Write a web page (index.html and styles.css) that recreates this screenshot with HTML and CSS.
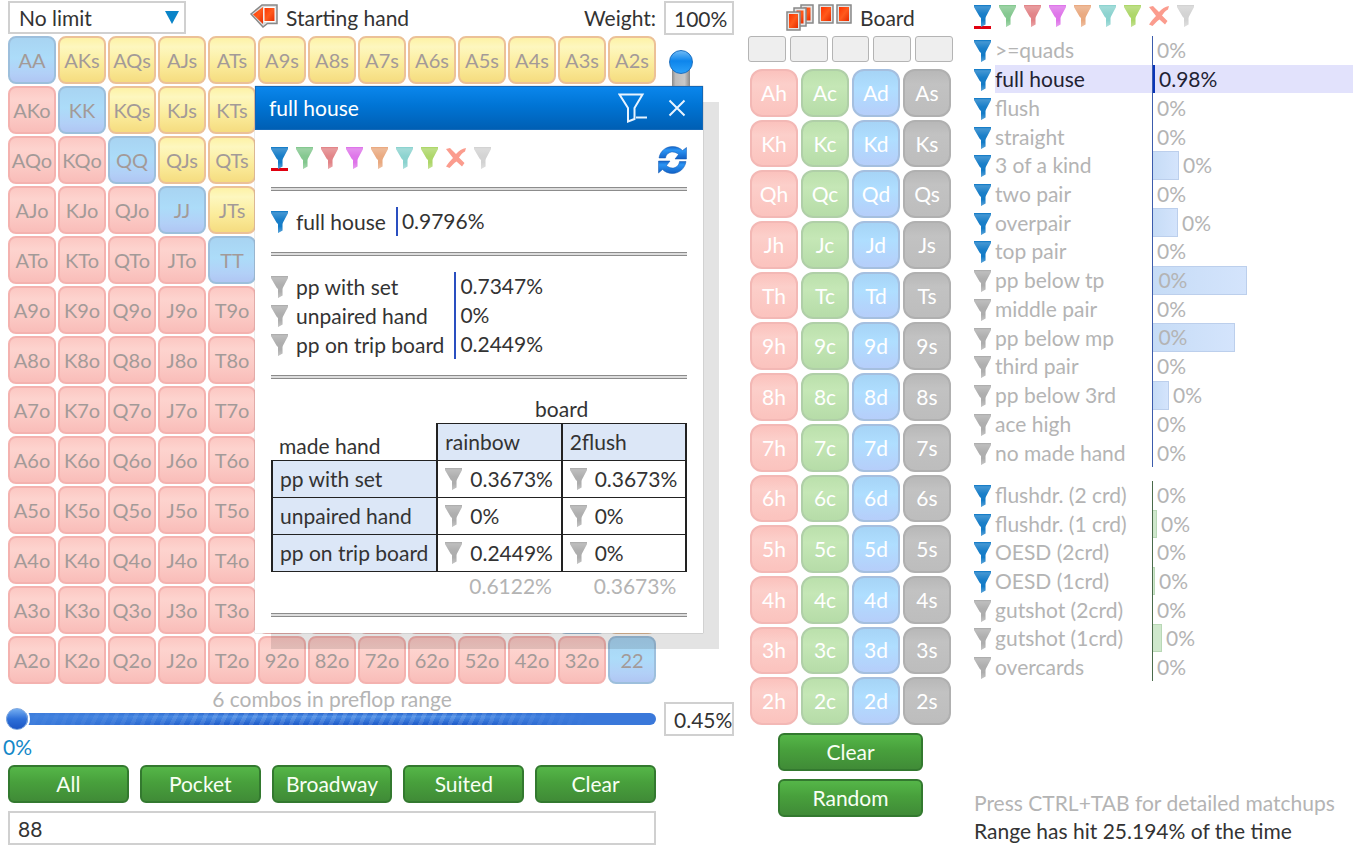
FILE: index.html
```html
<!DOCTYPE html>
<html lang="en">
<head>
    <meta charset="UTF-8">
    <meta name="viewport" content="width=device-width, initial-scale=1.0">
    <title>Starting hand range</title>
    <link rel="stylesheet" href="styles.css">
</head>
<body>

<!-- Shared icons -->
<svg class="icon-defs" aria-hidden="true">
    <defs>
        <linearGradient id="shine" x1="0" y1="0" x2="0" y2="1">
            <stop offset="0" stop-color="#fff" stop-opacity="0"/>
            <stop offset="0.08" stop-color="#fff" stop-opacity="0.25"/>
            <stop offset="0.4" stop-color="#fff" stop-opacity="0.08"/>
            <stop offset="0.7" stop-color="#fff" stop-opacity="0.05"/>
            <stop offset="1" stop-color="#fff" stop-opacity="0.35"/>
        </linearGradient>
        <linearGradient id="card-red" x1="0" y1="0" x2="1" y2="1">
            <stop offset="0" stop-color="#f30"/>
            <stop offset="0.5" stop-color="#ff5a1c"/>
            <stop offset="1" stop-color="#e62a00"/>
        </linearGradient>
        <linearGradient id="sync-blue" x1="0" y1="0" x2="0" y2="1">
            <stop offset="0" stop-color="#1565c8"/>
            <stop offset="0.3" stop-color="#2b95f5"/>
            <stop offset="1" stop-color="#1260c4"/>
        </linearGradient>
    </defs>
    <symbol id="funnel" viewBox="0 0 17 22">
        <path fill="currentColor" d="M0 0H17V2L12 11.500L11.500 13V19.500L7 22V13L5.500 11.500L0 2Z"/>
        <path fill="url(#shine)" d="M0 0H17V2L12 11.500L11.500 13V19.500L7 22V13L5.500 11.500L0 2Z"/>
    </symbol>
    <symbol id="cross" viewBox="0 0 20 20">
        <path fill="currentColor" d="M0 1L4 0L10 6C13 3 16 0.500 20 0L19 3.500C16 5 14.500 7.500 13 9.500L18.500 15L16 18.500L10.500 13.500C8 15 6.500 17 3.500 20L0 18.500C2 15.500 4.500 12.500 7 10Z"/>
    </symbol>
</svg>

<main class="app">

    <section class="hands">
        <div class="hands-top">
            <div class="limit">
                <select id="limit" aria-label="Limit type">
                    <option>No limit</option>
                    <option>Pot limit</option>
                    <option>Fixed limit</option>
                </select>
                <span class="limit-arrow"></span>
            </div>
            <h2 class="title">
                <svg width="28" height="24" viewBox="0 0 28 24" aria-hidden="true">
                    <path fill="#ddd" stroke="#888" stroke-width="1.500" d="M1 10L12 1H27V19.500H17.500L13 23Z"/>
                    <path fill="url(#card-red)" d="M3 10.500L13 3V20Z"/>
                    <path fill="url(#card-red)" stroke="#fff" d="M14 3.500H25V17.500H14Z"/>
                </svg>
                Starting hand
            </h2>
            <label class="weight-label" for="weight">Weight:</label>
        </div>
        <input class="box" id="weight" type="text" value="100%">

        <div class="matrix" id="matrix"></div>
        <div class="weight-track">
            <input class="vslider" type="range" min="0" max="100" value="100" aria-label="Weight">
        </div>

        <div class="range-row">
            <label class="combos" for="percent-slider">6 combos in preflop range</label>
            <input class="hslider" id="percent-slider" type="range" min="0" max="100" value="0">
            <output class="slider-value" for="percent-slider">0%</output>
        </div>
        <div class="percent">
            <input class="box" type="text" value="0.45%" aria-label="Range percent">
        </div>

        <div class="presets">
            <button class="btn">All</button>
            <button class="btn">Pocket</button>
            <button class="btn">Broadway</button>
            <button class="btn">Suited</button>
            <button class="btn">Clear</button>
        </div>
        <input class="box range-text" type="text" value="88" aria-label="Range">

        <!-- Detail window -->
        <div class="popup" id="popup" role="dialog" aria-labelledby="popup-title">
            <header class="popup-head">
                <h3 id="popup-title">full house</h3>
                <button class="head-btn" aria-label="Remove filter">
                    <svg width="30" height="30" viewBox="0 0 30 30" fill="none" stroke="#e8f4ff" stroke-width="2" aria-hidden="true">
                        <path d="M1.500 1.500H24.500L16.500 15V26L10 28.500V15Z"/>
                        <path d="M18 24.500H29"/>
                    </svg>
                </button>
                <button class="head-btn" aria-label="Close">
                    <svg width="18" height="18" viewBox="0 0 18 18" fill="none" stroke="#e8f4ff" stroke-width="2" aria-hidden="true">
                        <path d="M1.500 1.500L16.500 16.500M16.500 1.500L1.500 16.500"/>
                    </svg>
                </button>
            </header>
            <div class="popup-body">
                <div class="popup-tools">
                    <div class="filters"></div>
                    <button class="sync" aria-label="Refresh">
                        <svg width="29" height="28" viewBox="0 0 29 28" aria-hidden="true">
                            <path fill="url(#sync-blue)" stroke="#0f57b0" stroke-width="0.500" d="M1 12C2 5 8 0.500 14.500 0.500C18.500 0.500 22 2 24.500 4.500L28.500 1.500V13H17L20.500 8.500C19 7 17 6 14.500 6C11 6 8 8.500 7.500 12Z"/>
                            <path fill="url(#sync-blue)" stroke="#0f57b0" stroke-width="0.500" d="M28 15.500C27 22.500 21 27.500 14.500 27.500C10.500 27.500 7 26 4.500 23.500L0.500 27V15H12L8.500 19.500C10 21 12 22 14.500 22C18 22 21 19.500 21.500 15.500Z"/>
                        </svg>
                    </button>
                </div>
                <hr>
                <div class="detail">
                    <svg class="funnel on"><use href="#funnel"/></svg>
                    <span class="name">full house</span>
                    <span class="val">0.9796%</span>
                </div>
                <hr>
                <div class="detail">
                    <svg class="funnel"><use href="#funnel"/></svg>
                    <span class="name">pp with set</span>
                    <span class="val">0.7347%</span>
                    <svg class="funnel"><use href="#funnel"/></svg>
                    <span class="name">unpaired hand</span>
                    <span class="val">0%</span>
                    <svg class="funnel"><use href="#funnel"/></svg>
                    <span class="name">pp on trip board</span>
                    <span class="val">0.2449%</span>
                </div>
                <hr>
                <table class="breakdown">
                    <thead>
                        <tr>
                            <td></td>
                            <th class="axis" colspan="2">board</th>
                        </tr>
                        <tr class="line">
                            <th class="corner">made hand</th>
                            <th>rainbow</th>
                            <th>2flush</th>
                        </tr>
                    </thead>
                    <tbody>
                        <tr class="line">
                            <th>pp with set</th>
                            <td><span><svg class="funnel"><use href="#funnel"/></svg>0.3673%</span></td>
                            <td><span><svg class="funnel"><use href="#funnel"/></svg>0.3673%</span></td>
                        </tr>
                        <tr class="line">
                            <th>unpaired hand</th>
                            <td><span><svg class="funnel"><use href="#funnel"/></svg>0%</span></td>
                            <td><span><svg class="funnel"><use href="#funnel"/></svg>0%</span></td>
                        </tr>
                        <tr class="line">
                            <th>pp on trip board</th>
                            <td><span><svg class="funnel"><use href="#funnel"/></svg>0.2449%</span></td>
                            <td><span><svg class="funnel"><use href="#funnel"/></svg>0%</span></td>
                        </tr>
                    </tbody>
                    <tfoot>
                        <tr>
                            <td></td>
                            <td>0.6122%</td>
                            <td>0.3673%</td>
                        </tr>
                    </tfoot>
                </table>
                <hr>
            </div>
        </div>
    </section>

    <section class="board">
        <h2 class="title board-title">
            <svg width="66" height="27" viewBox="0 0 66 27" aria-hidden="true">
                <g fill="#e4e4e4" stroke="#888" stroke-width="1.500">
                    <rect x="15" y="1" width="12" height="18"/>
                    <rect x="17.500" y="3.500" width="7" height="13" fill="url(#card-red)" stroke="none"/>
                    <rect x="8" y="4" width="12" height="18"/>
                    <rect x="10.500" y="6.500" width="7" height="13" fill="url(#card-red)" stroke="none"/>
                    <rect x="1" y="8" width="13" height="18"/>
                    <rect x="3" y="10" width="9" height="14" fill="url(#card-red)" stroke="none"/>
                    <rect x="33" y="1" width="14" height="18"/>
                    <rect x="35" y="3" width="10" height="14" fill="url(#card-red)" stroke="none"/>
                    <rect x="51" y="1" width="14" height="18"/>
                    <rect x="53" y="3" width="10" height="14" fill="url(#card-red)" stroke="none"/>
                </g>
            </svg>
            Board
        </h2>
        <div class="slots">
            <span></span><span></span><span></span><span></span><span></span>
        </div>
        <div class="deck" id="deck"></div>
        <div class="board-actions">
            <button class="btn">Clear</button>
            <button class="btn">Random</button>
        </div>
    </section>

    <section class="stats">
        <div class="filters"></div>
        <div class="stat-list made" id="made"></div>
        <div class="stat-list draws" id="draws"></div>
        <p class="hint">Press CTRL+TAB for detailed matchups</p>
        <p class="summary">Range has hit 25.194% of the time</p>
    </section>

</main>

<script src="script.js"></script>
</body>
</html>
```

FILE: styles.css
```css
* {
    box-sizing: border-box;
}
body {
    margin: 0;
    background-color: #fff;
    color: #333;
    font-family: Lato, "Open Sans", sans-serif;
    font-size: 21px;
    line-height: 28px;
}
h2, h3, p {
    margin: 0;
    font-size: 21px;
    font-weight: normal;
}
button, input, select {
    font: inherit;
    color: inherit;
    margin: 0;
}
button {
    cursor: pointer;
    padding: 0;
}
svg {
    display: block;
}
.icon-defs {
    position: absolute;
    width: 0;
    height: 0;
}
.app {
    display: grid;
    grid-template-columns: 726fr 205fr 386fr;
    gap: 14px;
    padding-left: 8px;
    min-height: 100vh;
}

/* Starting hands */
.hands {
    position: relative;
    display: grid;
    grid-template-columns: 1fr 70px;
    column-gap: 8px;
    align-content: start;
    padding-top: 1px;
}
.hands-top {
    display: flex;
    align-items: center;
    height: 35px;
    padding-bottom: 2px;
}
.limit {
    display: grid;
    align-items: center;
    width: 178px;
}
.limit select {
    grid-area: 1 / 1;
    appearance: none;
    height: 33px;
    padding: 0 9px;
    border: 2px solid #d0d0d0;
    border-radius: 0;
    background-color: #fff;
}
.limit-arrow {
    grid-area: 1 / 1;
    justify-self: end;
    margin-right: 7px;
    border: 7px solid transparent;
    border-top: 13px solid #0a84c8;
    border-bottom: 0;
    pointer-events: none;
}
.title {
    display: flex;
    align-items: center;
    gap: 8px;
}
.hands-top .title {
    margin-left: 64px;
}
.hands-top .title svg {
    margin-bottom: 4px;
}
.weight-label {
    margin-left: auto;
}
.box {
    width: 100%;
    min-width: 0;
    height: 34px;
    padding: 0 0 0 8px;
    border: 2px solid #d0d0d0;
    background-color: #fff;
}
.matrix {
    display: grid;
    grid-template-columns: repeat(13, 1fr);
    grid-auto-rows: 48px;
    gap: 2px;
}
.cell {
    border: 2px solid #f4b2af;
    border-radius: 8px;
    background: linear-gradient(#fcc8c3, #fdd3ce 25%, #fccdc8 55%, #f9bdb9);
    color: #a39a98;
    font-size: 20px;
    min-width: 0;
}
.cell.suited {
    border-color: #ecc197;
    background: linear-gradient(#fdf2a6, #fdf7bf 20%, #fbec9c 60%, #f5dc80);
}
.cell.pair {
    border-color: #9dbfdc;
    background: linear-gradient(#a8d4f2, #acdcf9 45%, #b2d0f7 80%, #b0c6f3);
}
.cell.covered {
    visibility: hidden;
}
.weight-track {
    padding: 14px 0 0 5px;
}
.vslider {
    display: block;
    appearance: none;
    writing-mode: vertical-lr;
    direction: rtl;
    width: 24px;
    height: 560px;
    background: none;
}
.vslider::-webkit-slider-runnable-track {
    width: 18px;
    background: linear-gradient(90deg, #8a8a8a, #bcbcbc 20%, #c8c8c8 70%, #888) 0 14px no-repeat;
}
.vslider::-webkit-slider-thumb {
    appearance: none;
    width: 24px;
    height: 24px;
    margin-left: -3px;
    border: 1px solid #1b6fc0;
    border-radius: 50%;
    background: linear-gradient(#6db9f5, #0d85ec 45%, #2ba0f8);
}
.range-row {
    display: flex;
    flex-direction: column;
    padding-top: 1px;
}
.combos {
    text-align: center;
    color: #b4b4b4;
}
.hslider {
    appearance: none;
    height: 12px;
    margin-left: -2px;
    border-radius: 6px;
    background:
        linear-gradient(90deg, #3f7fdd, transparent 35% 70%, #3a78da 90%),
        repeating-linear-gradient(115deg, rgba(255, 255, 255, 0.13) 0 4px, transparent 4px 9px),
        linear-gradient(#2a66cc, #4a8de6 30%, #2360cc 90%);
}
.hslider::-webkit-slider-thumb {
    appearance: none;
    width: 22px;
    height: 22px;
    border: 1px solid #7fa8e0;
    border-radius: 50%;
    background: linear-gradient(#74aef2, #2d6fd8 50%, #1c56c4);
    box-shadow: 0 0 0 2px #fff;
}
.slider-value {
    margin: 8px 0 4px -5px;
    color: #1488c8;
}
.percent {
    padding-top: 18px;
}
.btn {
    height: 38px;
    border: 2px solid #33792f;
    border-radius: 6px;
    background: linear-gradient(#55b648, #48a03c 45%, #408b37);
    color: #f8fff4;
}
.presets {
    grid-column: 1;
    display: grid;
    grid-template-columns: repeat(5, 1fr);
    gap: 11px;
}
.range-text {
    grid-column: 1;
    margin-top: 8px;
}

/* Detail window */
.popup {
    position: absolute;
    top: 86px;
    left: 247px;
    width: 448px;
    background-color: #fff;
    box-shadow: 16px 16px 0 rgba(0, 0, 0, 0.11), 0 0 1px #888;
}
.popup-head {
    display: flex;
    align-items: center;
    gap: 20px;
    height: 44px;
    padding: 0 16px 0 13px;
    border: 1px solid #1368b8;
    background: linear-gradient(#0a86ec, #0074d4 45%, #005fb4);
    color: #fff;
}
.popup-head h3 {
    margin-right: auto;
}
.head-btn, .sync, .filters button {
    border: 0;
    background: none;
}
.popup-body {
    padding: 16px;
}
.popup-tools {
    display: flex;
    justify-content: space-between;
    height: 41px;
}
.sync {
    height: 28px;
}
hr {
    height: 4px;
    margin: 0;
    border: 1px solid #8c8c8c;
    border-width: 1px 0;
    background-color: #ddd;
}
.filters {
    display: flex;
    gap: 8px;
}
.filters button {
    height: 25px;
    padding-top: 1px;
    border-bottom: 3px solid transparent;
}
.filters button.active {
    border-bottom-color: #e00010;
}
.funnel {
    flex: none;
    width: 17px;
    height: 22px;
    color: #a8a8a8;
}
.funnel.on {
    color: #0674c4;
}
.filters .cross {
    width: 20px;
    height: 20px;
}
.detail {
    display: grid;
    grid-template-columns: 25px auto 1fr;
    align-items: center;
    grid-auto-rows: 29px;
    padding: 16px 0;
}
.detail .name {
    padding-right: 10px;
}
.detail .val {
    height: 29px;
    padding-left: 4px;
    border-left: 2px solid #2a4fc0;
}
.breakdown {
    width: 100%;
    margin: 16px 0 13px;
    border-collapse: collapse;
}
.breakdown th, .breakdown td {
    height: 28px;
    padding: 0 7px;
    text-align: left;
    font-weight: normal;
}
.breakdown .axis {
    text-align: center;
}
.breakdown .line th, .breakdown .line td {
    height: 37px;
    border: 1px solid #222;
    border-width: 1px 2px;
}
.breakdown .line th {
    background-color: #dce7f7;
}
.breakdown .line .corner {
    border-width: 0;
    background: none;
    vertical-align: bottom;
}
.breakdown span {
    display: flex;
    align-items: center;
    gap: 8px;
}
.breakdown tfoot td {
    padding-left: 32px;
    color: #b4b4b4;
}

/* Board */
.board {
    display: flex;
    flex-direction: column;
}
.board-title {
    justify-content: center;
    height: 36px;
}
.board-title svg {
    margin-bottom: 2px;
}
.slots {
    display: flex;
    gap: 4px;
}
.slots span {
    flex: 1;
    height: 26px;
    border: 1px solid #b4b4b4;
    border-radius: 3px;
    background-color: #eee;
}
.deck {
    display: grid;
    grid-template-columns: repeat(4, 1fr);
    grid-auto-rows: 1fr;
    gap: 3px;
    height: 663px;
    padding: 7px 2px 0;
}
.card {
    border: 2px solid #f3b8b5;
    border-radius: 12px;
    background: linear-gradient(#fbc2bd, #fccfca 30%, #fbc3be);
    color: #fff;
}
.card.c {
    border-color: #b0cfa8;
    background: linear-gradient(#bbe0ac, #c5e7b6 35%, #b6dca8);
}
.card.d {
    border-color: #a5bfdf;
    background: linear-gradient(#a6d4f6, #afdeff 40%, #b6cefa);
}
.card.s {
    border-color: #b0b0b0;
    background: linear-gradient(#b8b8b8, #c2c2c2 30%, #bdbdbd);
}
.board-actions {
    display: flex;
    flex-direction: column;
    gap: 8px;
    padding: 8px 30px 0;
}

/* Hit statistics */
.stats {
    display: flex;
    flex-direction: column;
    padding: 4px 0 3px 7px;
    color: #b4b4b4;
}
.stat-list {
    display: grid;
    grid-template-columns: 21px 157px 1fr;
    grid-auto-rows: minmax(0, 1fr);
    align-items: center;
}
.stat-list .funnel {
    margin-top: 2px;
}
.made {
    height: 431px;
    margin-top: 7px;
}
.draws {
    height: 200px;
    margin-top: 14px;
}
.stat-name, .stat-bar {
    display: flex;
    align-items: center;
    height: 100%;
}
.stat-bar {
    gap: 4px;
    border-left: 1px solid #3c5cac;
}
.draws .stat-bar {
    border-left-color: #4a6a4a;
}
.bar {
    height: 100%;
    border: 1px solid #bccfec;
    border-left: 0;
    background: linear-gradient(90deg, #c6dcf6, #d4e4fc);
    line-height: 26px;
}
.draws .bar {
    border-color: #b9d8b6;
    background: #cfe8cc;
}
.bar.none {
    border: 0;
}
.current {
    background-color: #e2e2fc;
    color: #223;
}
.current .bar {
    border: 0;
    background: #0a35b8;
}
.hint {
    margin-top: auto;
}
.summary {
    color: #333;
}
```

FILE: script.js
```js
var ranks = 'AKQJT98765432'.split('');

// 13x13 starting hand grid: pairs on the diagonal, suited above it
var matrix = '';
ranks.forEach(function (row, r) {
    ranks.forEach(function (col, c) {
        if (r === c) {
            matrix += '<button class="cell pair">' + row + col + '</button>';
        } else if (c > r) {
            matrix += '<button class="cell suited">' + row + col + 's</button>';
        } else {
            matrix += '<button class="cell">' + col + row + 'o</button>';
        }
    });
});
document.getElementById('matrix').innerHTML = matrix;

// Board cards
var deck = '';
ranks.forEach(function (rank) {
    ['h', 'c', 'd', 's'].forEach(function (suit) {
        deck += '<button class="card ' + suit + '">' + rank + suit + '</button>';
    });
});
document.getElementById('deck').innerHTML = deck;

// Filter colours
var colors = ['#0674c4', '#7cc488', '#e07c80', '#dc6ce8', '#e8a478', '#84d0cc', '#a8d460'];
var filters = colors.map(function (color, i) {
    return '<button' + (i === 0 ? ' class="active"' : '') + ' aria-label="Filter ' + (i + 1) + '">' +
        '<svg class="funnel" style="color: ' + color + '"><use href="#funnel"/></svg></button>';
}).join('');
filters += '<button aria-label="Remove filters"><svg class="cross" style="color: #fb9c8e"><use href="#cross"/></svg></button>';
filters += '<button aria-label="No filter"><svg class="funnel" style="color: #d0d0d0"><use href="#funnel"/></svg></button>';
document.querySelectorAll('.filters').forEach(function (el) {
    el.innerHTML = filters;
});

// name, filter on, bar width, value
var made = [
    ['&gt;=quads', true, 0, '0%'],
    ['full house', true, 2, '0.98%'],
    ['flush', true, 0, '0%'],
    ['straight', true, 0, '0%'],
    ['3 of a kind', true, 26, '0%'],
    ['two pair', true, 0, '0%'],
    ['overpair', true, 25, '0%'],
    ['top pair', true, 0, '0%'],
    ['pp below tp', false, 94, '0%', true],
    ['middle pair', false, 0, '0%'],
    ['pp below mp', false, 82, '0%', true],
    ['third pair', false, 0, '0%'],
    ['pp below 3rd', false, 16, '0%'],
    ['ace high', false, 0, '0%'],
    ['no made hand', false, 0, '0%']
];
var draws = [
    ['flushdr. (2 crd)', true, 0, '0%'],
    ['flushdr. (1 crd)', true, 4, '0%'],
    ['OESD (2crd)', true, 0, '0%'],
    ['OESD (1crd)', true, 2, '0%'],
    ['gutshot (2crd)', false, 0, '0%'],
    ['gutshot (1crd)', false, 9, '0%'],
    ['overcards', false, 0, '0%']
];

function fillStats(id, rows) {
    document.getElementById(id).innerHTML = rows.map(function (row) {
        var current = row[0] === 'full house' ? ' current' : '';
        // long bars carry their value inside
        var bar = '<span class="bar' + (row[2] ? '' : ' none') + '" style="width: ' + row[2] + 'px">' +
            (row[4] ? '&nbsp;' + row[3] : '') + '</span>';
        return '<svg class="funnel' + (row[1] ? ' on' : '') + '"><use href="#funnel"/></svg>' +
            '<span class="stat-name' + current + '">' + row[0] + '</span>' +
            '<span class="stat-bar' + current + '">' + bar + (row[4] ? '' : row[3]) + '</span>';
    }).join('');
}
fillStats('made', made);
fillStats('draws', draws);

// Cells behind the detail window must not take focus
function coverCells() {
    var box = document.getElementById('popup').getBoundingClientRect();
    document.querySelectorAll('.cell').forEach(function (cell) {
        var r = cell.getBoundingClientRect();
        cell.classList.toggle('covered', r.left >= box.left && r.right <= box.right &&
            r.top >= box.top - 1 && r.bottom <= box.bottom);
    });
}
coverCells();
window.addEventListener('resize', coverCells);
```
